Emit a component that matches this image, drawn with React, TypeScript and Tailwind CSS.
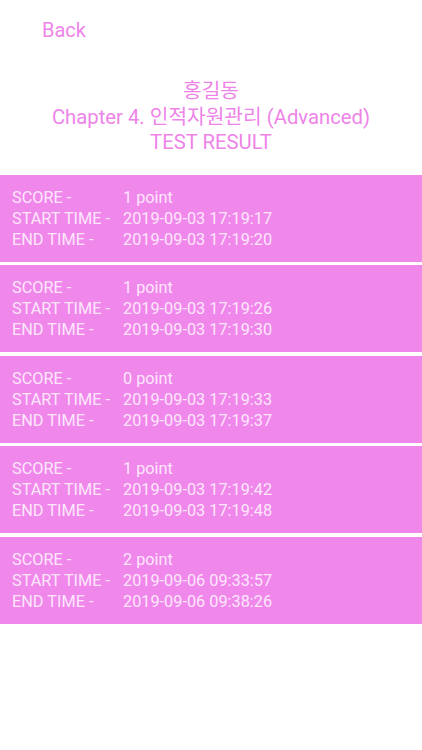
const results = [
  { score: "1 point", start: "2019-09-03 17:19:17", end: "2019-09-03 17:19:20" },
  { score: "1 point", start: "2019-09-03 17:19:26", end: "2019-09-03 17:19:30" },
  { score: "0 point", start: "2019-09-03 17:19:33", end: "2019-09-03 17:19:37" },
  { score: "1 point", start: "2019-09-03 17:19:42", end: "2019-09-03 17:19:48" },
  { score: "2 point", start: "2019-09-06 09:33:57", end: "2019-09-06 09:38:26" }
];

function ResultCard({ score, start, end }: { score: string; start: string; end: string }): JSX.Element {
  return (
    <div className="flex h-[87px] flex-col justify-center bg-[#f088ec] px-3 text-[16.3px] leading-[21px] text-[#fde6fb]">
      <div className="grid grid-cols-[111px_1fr]">
        <span>SCORE -</span>
        <span>{score}</span>
        <span>START TIME -</span>
        <span>{start}</span>
        <span>END TIME -</span>
        <span>{end}</span>
      </div>
    </div>
  );
}

export default function App(): JSX.Element {
  return (
    <div className="min-h-[750px] w-[422px] bg-white font-['Roboto','Noto_Sans_CJK_KR',sans-serif]">
      <header className="px-[42px] pt-[18px]">
        <button className="text-[20px] leading-[25px] text-[#ee84e8]" type="button">
          Back
        </button>
      </header>

      <div className="mt-[35px] flex flex-col items-center text-[20.3px] leading-[25.5px] text-[#ee84e8]">
        <p>홍길동</p>
        <p>Chapter 4. 인적자원관리 (Advanced)</p>
        <p>TEST RESULT</p>
      </div>

      <main className="mt-[19px] flex flex-col gap-[3.5px]">
        {results.map((r, i) => (
          <ResultCard key={i} end={r.end} score={r.score} start={r.start} />
        ))}
      </main>
    </div>
  );
}
